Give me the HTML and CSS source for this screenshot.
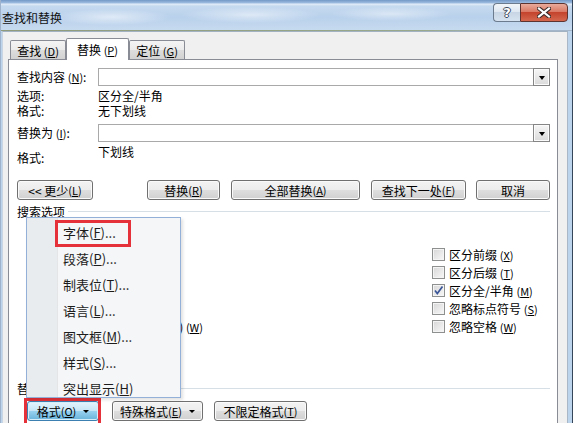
FILE: index.html
```html
<!DOCTYPE html>
<html lang="zh-CN">
<head>
    <meta charset="UTF-8">
    <meta name="viewport" content="width=device-width, initial-scale=1.0">
    <title>查找和替换</title>
    <link rel="stylesheet" href="styles.css">
</head>
<body>
    <div class="window">
        <div class="titlebar">
            <div class="title">查找和替换</div>
            <div class="caption-buttons">
                <div class="cap-btn help">?</div>
                <div class="cap-btn close">
                    <svg width="14" height="11" viewBox="0 0 14 11">
                        <path d="M2 1.5 L12 9.5 M12 1.5 L2 9.5" stroke="#3a2a2a" stroke-width="4.2" stroke-linecap="square"/>
                        <path d="M2 1.5 L12 9.5 M12 1.5 L2 9.5" stroke="#fff" stroke-width="2.2" stroke-linecap="square"/>
                    </svg>
                </div>
            </div>
        </div>

        <div class="client">
            <div class="tabs">
                <div class="tab tab-find">查找 <span class="key">(<u>D</u>)</span></div>
                <div class="tab tab-replace active">替换 <span class="key">(<u>P</u>)</span></div>
                <div class="tab tab-goto">定位 <span class="key">(<u>G</u>)</span></div>
            </div>

            <div class="panel">
                <div class="fields">
                    <div class="label input-label">查找内容 <span class="key">(<u>N</u>)</span>:</div>
                    <div class="combo"><span class="combo-arrow"></span></div>

                    <div class="label first-info">选项:</div>
                    <div class="value first-info">区分全/半角</div>

                    <div class="label">格式:</div>
                    <div class="value">无下划线</div>

                    <div class="label input-label second-input">替换为 <span class="key">(<u>I</u>)</span>:</div>
                    <div class="combo second-input"><span class="combo-arrow"></span></div>

                    <div class="label low-label">格式:</div>
                    <div class="value low-value">下划线</div>
                </div>

                <div class="actions">
                    <button class="btn btn-less">&lt;&lt; 更少 <span class="key">(<u>L</u>)</span></button>
                    <button class="btn btn-replace">替换 <span class="key">(<u>R</u>)</span></button>
                    <button class="btn btn-all">全部替换 <span class="key">(<u>A</u>)</span></button>
                    <button class="btn btn-next">查找下一处 <span class="key">(<u>F</u>)</span></button>
                    <button class="btn btn-cancel">取消</button>
                </div>

                <div class="group-title search-title">
                    <span>搜索选项</span>
                    <span class="rule"></span>
                </div>

                <div class="options">
                    <!-- left column sits behind the popup, only the end of the last line shows -->
                    <div class="opt-col opt-left">
                        <div class="opt"></div>
                        <div class="opt"></div>
                        <div class="opt"></div>
                        <div class="opt"></div>
                        <div class="opt"><span class="peek"><span>(英文) <span class="key">(<u>W</u>)</span></span></span></div>
                    </div>
                    <div class="opt-col opt-right">
                        <div class="opt"><span class="chk"></span><span class="opt-label">区分前缀 <span class="key">(<u>X</u>)</span></span></div>
                        <div class="opt"><span class="chk"></span><span class="opt-label">区分后缀 <span class="key">(<u>T</u>)</span></span></div>
                        <div class="opt"><span class="chk checked"><svg width="11" height="11" viewBox="0 0 11 11"><path d="M2 5.5 L4.3 8.5 L9.5 1.5" fill="none" stroke="#3b5698" stroke-width="1.7"/></svg></span><span class="opt-label">区分全/半角 <span class="key">(<u>M</u>)</span></span></div>
                        <div class="opt"><span class="chk"></span><span class="opt-label">忽略标点符号 <span class="key">(<u>S</u>)</span></span></div>
                        <div class="opt"><span class="chk"></span><span class="opt-label">忽略空格 <span class="key">(<u>W</u>)</span></span></div>
                    </div>
                </div>

                <div class="group-title replace-title">
                    <span>替换</span>
                    <span class="rule"></span>
                </div>

                <div class="actions bottom-actions">
                    <button class="btn btn-format pressed">格式 <span class="key">(<u>O</u>)</span><span class="caret"></span></button>
                    <button class="btn btn-special">特殊格式 <span class="key">(<u>E</u>)</span><span class="caret"></span></button>
                    <button class="btn btn-nolimit">不限定格式 <span class="key">(<u>T</u>)</span></button>
                </div>

                <!-- popup of the 格式 button -->
                <div class="menu">
                    <div class="menu-item"><span class="marked">字体(<u>F</u>)...</span></div>
                    <div class="menu-item">段落(<u>P</u>)...</div>
                    <div class="menu-item">制表位(<u>T</u>)...</div>
                    <div class="menu-item">语言(<u>L</u>)...</div>
                    <div class="menu-item">图文框(<u>M</u>)...</div>
                    <div class="menu-item">样式(<u>S</u>)...</div>
                    <div class="menu-item">突出显示(<u>H</u>)</div>
                </div>
            </div>
        </div>
    </div>
</body>
</html>
```

FILE: styles.css
```css
* {
    box-sizing: border-box;
}

body {
    margin: 0;
    background: #fff;
    font-family: "Noto Sans CJK SC", "Noto Sans", sans-serif;
    font-size: 12px;
    color: #000;
}

.window {
    width: 573px;
    height: 423px;
    overflow: hidden;
    display: flex;
    flex-direction: column;
    background: #bdd4ed;
    border-left: 1px solid #9fb4cc;
    border-right: 1px solid #36465a;
}

/* title bar */
.titlebar {
    height: 31px;
    flex-shrink: 0;
    display: flex;
    justify-content: space-between;
    padding-left: 1px;
    background:
        linear-gradient(to right, #8f9b7b, #9aa98c 75%, #a4b6ca 90%) left bottom / 100% 1px no-repeat,
        radial-gradient(ellipse 60px 8px at 110px 17px, rgba(255,255,255,0.55), rgba(255,255,255,0) 100%),
        radial-gradient(ellipse 70px 8px at 250px 15px, rgba(255,255,255,0.5), rgba(255,255,255,0) 100%),
        radial-gradient(ellipse 60px 7px at 390px 14px, rgba(255,255,255,0.45), rgba(255,255,255,0) 100%),
        linear-gradient(to bottom, #7398c6 0, #9fbde0 3px, #e4edf8 4px, #c6daef 6px, #b9d1ec 55%, #c8dbef 100%);
}

.title {
    padding-top: 10px;
    line-height: 15px;
    font-size: 12px;
    color: #111;
}

.caption-buttons {
    display: flex;
    margin-top: 3px;
    margin-right: 4px;
    height: 19px;
}

.cap-btn {
    display: flex;
    align-items: center;
    justify-content: center;
}

.help {
    width: 27px;
    border: 1px solid #6c7b8e;
    border-right: none;
    border-radius: 4px 0 0 4px;
    background: linear-gradient(to bottom, #f2f6fa 0%, #dfe7f1 45%, #c8d5e4 50%, #d6e2ef 100%);
    color: #fff;
    font-family: "DejaVu Sans", sans-serif;
    font-weight: bold;
    font-size: 13px;
    text-shadow: 1px 0 0 #3c4a5c, -1px 0 0 #3c4a5c, 0 1px 0 #3c4a5c, 0 -1px 0 #3c4a5c;
}

.close {
    width: 48px;
    border: 1px solid #5e3430;
    border-radius: 0 4px 4px 0;
    background: linear-gradient(to bottom, #e9ab9c 0%, #d97a65 45%, #c4442d 50%, #d4674e 100%);
}

/* client area */
.client {
    flex: 1;
    margin-left: 1px;
    margin-right: 4px;
    border-left: 1px solid #c9d5e2;
    border-right: 1px solid #a9b7c6;
    border-top: 1px solid #a3b2c3;
    background: #f0f0f0;
    padding: 6px 0 0 5px;
}

.tabs {
    display: flex;
    align-items: flex-end;
    height: 21px;
    margin-left: 2px;
}

.tab {
    height: 19px;
    border: 1px solid #898c95;
    border-bottom: none;
    border-radius: 2px 2px 0 0;
    background: linear-gradient(to bottom, #f4f4f4 0%, #ebebeb 50%, #dddddd 51%, #d2d2d2 100%);
    text-align: center;
    line-height: 17px;
    padding-top: 1px;
    white-space: nowrap;
}

.tab-find {
    width: 56px;
}

.tab-replace {
    width: 63px;
}

.tab-goto {
    width: 56px;
}

.tab.active {
    position: relative;
    z-index: 1;
    height: 22px;
    margin-bottom: -1px;
    background: #fff;
    padding-top: 2px;
}

.key {
    font-size: 11px;
}

/* tab page */
.panel {
    position: relative;
    width: 550px;
    height: 380px;
    border: 1px solid #898c95;
    background: #fff;
    padding: 8px 7px 0 8px;
}

.fields {
    display: grid;
    grid-template-columns: 81px 1fr;
}

.label,
.value {
    line-height: 15px;
    white-space: nowrap;
}

.input-label {
    line-height: 18px;
}

.first-info {
    margin-top: 2px;
}

.second-input {
    margin-top: 6px;
}

.low-label {
    margin-top: 8px;
}

.low-value {
    margin-top: 2px;
}

.combo {
    height: 18px;
    border: 1px solid #a9a9a9;
    display: flex;
    justify-content: flex-end;
}

.combo-arrow {
    width: 17px;
    margin: -1px -1px -1px 0;
    border: 1px solid #858585;
    background: linear-gradient(to bottom, #f6f6f6, #dadada);
    box-shadow: inset 0 0 0 1px #fbfbfb;
    display: flex;
    align-items: center;
    justify-content: center;
}

.combo-arrow::after {
    content: "";
    border-left: 3px solid transparent;
    border-right: 3px solid transparent;
    border-top: 4px solid #000;
    margin-top: 1px;
}

/* buttons */
.actions {
    display: flex;
    margin-top: 15px;
}

.btn {
    height: 20px;
    padding: 0;
    border: 1px solid #707070;
    border-radius: 3px;
    background: linear-gradient(to bottom, #f3f3f3 0%, #ececec 50%, #dedede 51%, #d0d0d0 100%);
    box-shadow: inset 0 0 0 1px #fafafa;
    font-family: inherit;
    font-size: 12px;
    line-height: 17px;
    color: #000;
    display: flex;
    align-items: center;
    justify-content: center;
    white-space: nowrap;
}

.btn-less {
    width: 76px;
    margin-right: 54px;
}

.btn-replace {
    width: 73px;
    margin-right: 11px;
}

.btn-all {
    width: 129px;
    margin-right: 11px;
}

.btn-next {
    width: 95px;
    margin-right: 10px;
}

.btn-cancel {
    width: 74px;
}

.bottom-actions {
    margin-top: 5px;
}

.btn-format {
    width: 72px;
    margin-left: 10px;
    margin-right: 13px;
    position: relative;
}

.btn-special {
    width: 91px;
    margin-right: 11px;
}

.btn-nolimit {
    width: 93px;
}

.btn.pressed {
    border-color: #3c7fb1;
    background: linear-gradient(to bottom, #e5f4fc 0%, #c4e5f6 50%, #98d1ef 51%, #68b3db 100%);
    box-shadow: inset 0 0 0 1px #d6eefa;
}

/* red mark round the 格式 button */
.btn-format::after {
    content: "";
    position: absolute;
    left: -4px;
    top: -4px;
    right: -3px;
    bottom: -6px;
    border: 3px solid #e5323a;
}

.caret {
    margin-left: 7px;
    border-left: 3px solid transparent;
    border-right: 3px solid transparent;
    border-top: 3px solid #000;
}

/* group headers */
.group-title {
    display: flex;
    align-items: center;
    line-height: 15px;
    white-space: nowrap;
}

.search-title {
    margin-top: 4px;
}

.replace-title {
    margin-top: 46px;
}

.rule {
    flex: 1;
    height: 1px;
    margin-left: 3px;
    background: #d5dfe5;
}

/* search options */
.options {
    display: flex;
    margin-top: 26px;
}

.opt-left {
    flex: 1;
    padding-left: 10px;
}

.opt-right {
    width: 118px;
}

.opt {
    height: 18px;
    display: flex;
    align-items: center;
    white-space: nowrap;
}

.chk {
    width: 13px;
    height: 13px;
    flex-shrink: 0;
    border: 1px solid #8e8f8f;
    background: linear-gradient(135deg, #d6d6d6, #f8f8f8);
    box-shadow: inset 0 0 0 1px #f4f4f4;
    display: flex;
    align-items: center;
    justify-content: center;
}

.opt-label {
    margin-left: 4px;
}

/* end of a label that peeks out right of the popup */
.peek {
    display: flex;
    justify-content: flex-end;
    width: 23px;
    margin-left: 153px;
    overflow: hidden;
}

/* popup menu */
.menu {
    position: absolute;
    left: 17px;
    top: 157px;
    width: 155px;
    height: 181px;
    overflow: hidden;
    border: 1px solid #93b0d8;
    background: linear-gradient(to right, #e9ecee 0, #e9ecee 30px, #e3e5e7 30px, #e3e5e7 31px, #f5f6f7 31px);
    box-shadow: 2px 2px 3px rgba(0, 0, 0, 0.12);
    font-size: 13px;
    color: #1c1c1c;
}

.menu-item {
    height: 26px;
    padding: 4px 0 0 36px;
    line-height: 22px;
    white-space: nowrap;
}

.marked {
    position: relative;
}

.marked::after {
    content: "";
    position: absolute;
    left: -8px;
    top: -3px;
    width: 70px;
    height: 21px;
    border: 3px solid #e5323a;
}
```
